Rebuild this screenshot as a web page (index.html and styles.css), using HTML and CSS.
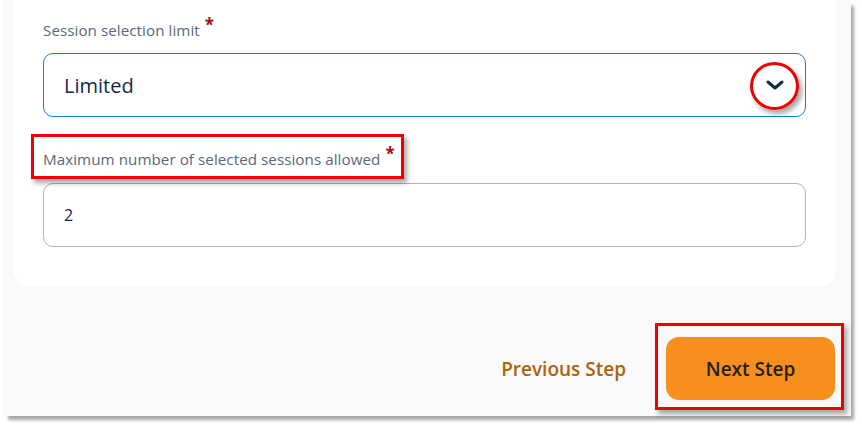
FILE: index.html
```html
<!DOCTYPE html>
<html>
<head>
<meta charset="utf-8">
<link rel="stylesheet" href="styles.css">
</head>
<body>
<div class="frame">
  <div class="card">
    <div class="label">Session selection limit <span class="req">*</span></div>
    <div class="field select">
      <span class="value">Limited</span>
      <svg class="chev" width="18" height="10" viewBox="0 0 18 10"><path d="M2 2 L9 8 L16 2" fill="none" stroke="#0e2a47" stroke-width="3" stroke-linecap="round" stroke-linejoin="round"/></svg>
    </div>
    <div class="label second">Maximum number of selected sessions allowed <span class="req">*</span></div>
    <div class="field input"><span class="num">2</span></div>
  </div>
  <div class="actions">
    <button class="prev">Previous Step</button>
    <button class="next">Next Step</button>
  </div>
  <div class="mark circle"></div>
  <div class="mark rect-label"></div>
  <div class="mark rect-btn"></div>
</div>
</body>
</html>
```

FILE: styles.css
```css
html, body { margin: 0; padding: 0; background: #ffffff; }
body { width: 862px; height: 428px; overflow: hidden; font-family: "Open Sans", "Lato", sans-serif; }

.frame {
  position: relative;
  margin-left: 3px;
  width: 848px;
  height: 416px;
  background: #f8f9fb;
  box-shadow: 4px 5px 3px -1px rgba(0,0,0,0.35);
}

.card {
  margin: 0 15px 0 10px;
  background: #ffffff;
  border-radius: 0 0 16px 16px;
  padding: 20px 30px 39px 30px;
}

.label {
  font-size: 15.2px;
  line-height: 20px;
  height: 20px;
  color: #58687d;
  font-weight: 500;
  white-space: nowrap;
  letter-spacing: 0.05px;
}
.label.second { margin-top: 32px; }
.req { color: #a00d0d; font-weight: 700; font-size: 17px; position: relative; top: -5px; margin-left: 1px; }

.field {
  margin-top: 13px;
  height: 62px;
  border-radius: 10px;
  background: #fff;
  display: flex;
  align-items: center;
  padding: 0 20px 0 20px;
}
.select { border: 1px solid #1f7ad6; justify-content: space-between; }
.input { border: 1px solid #a9b5c4; margin-top: 14px; }
.value { font-size: 20px; color: #102a48; font-weight: 400; }
.num { font-size: 16px; color: #102a48; }
.chev { margin-right: 1px; }

.actions {
  display: flex;
  justify-content: flex-end;
  align-items: center;
  gap: 40px;
  padding: 51px 16px 0 0;
}
.actions button {
  font-family: "Open Sans", sans-serif;
  font-size: 19px;
  font-weight: 600;
  border: none;
  cursor: pointer;
  letter-spacing: 0;
}
.prev { background: transparent; color: #ad6408; padding: 0; }
.next {
  background: #f78f1f;
  color: #1f2328;
  width: 169px;
  height: 63px;
  border-radius: 13px;
}

.mark {
  position: absolute;
  border: 3px solid #ee0000;
  box-sizing: border-box;
  box-shadow: 3px 4px 5px rgba(0,0,0,0.35);
}
.circle { left: 747px; top: 62px; width: 49px; height: 48px; border-radius: 50%; }
.rect-label { left: 28px; top: 134px; width: 373px; height: 45px; }
.rect-btn { left: 652px; top: 323px; width: 189px; height: 87px; }
```
